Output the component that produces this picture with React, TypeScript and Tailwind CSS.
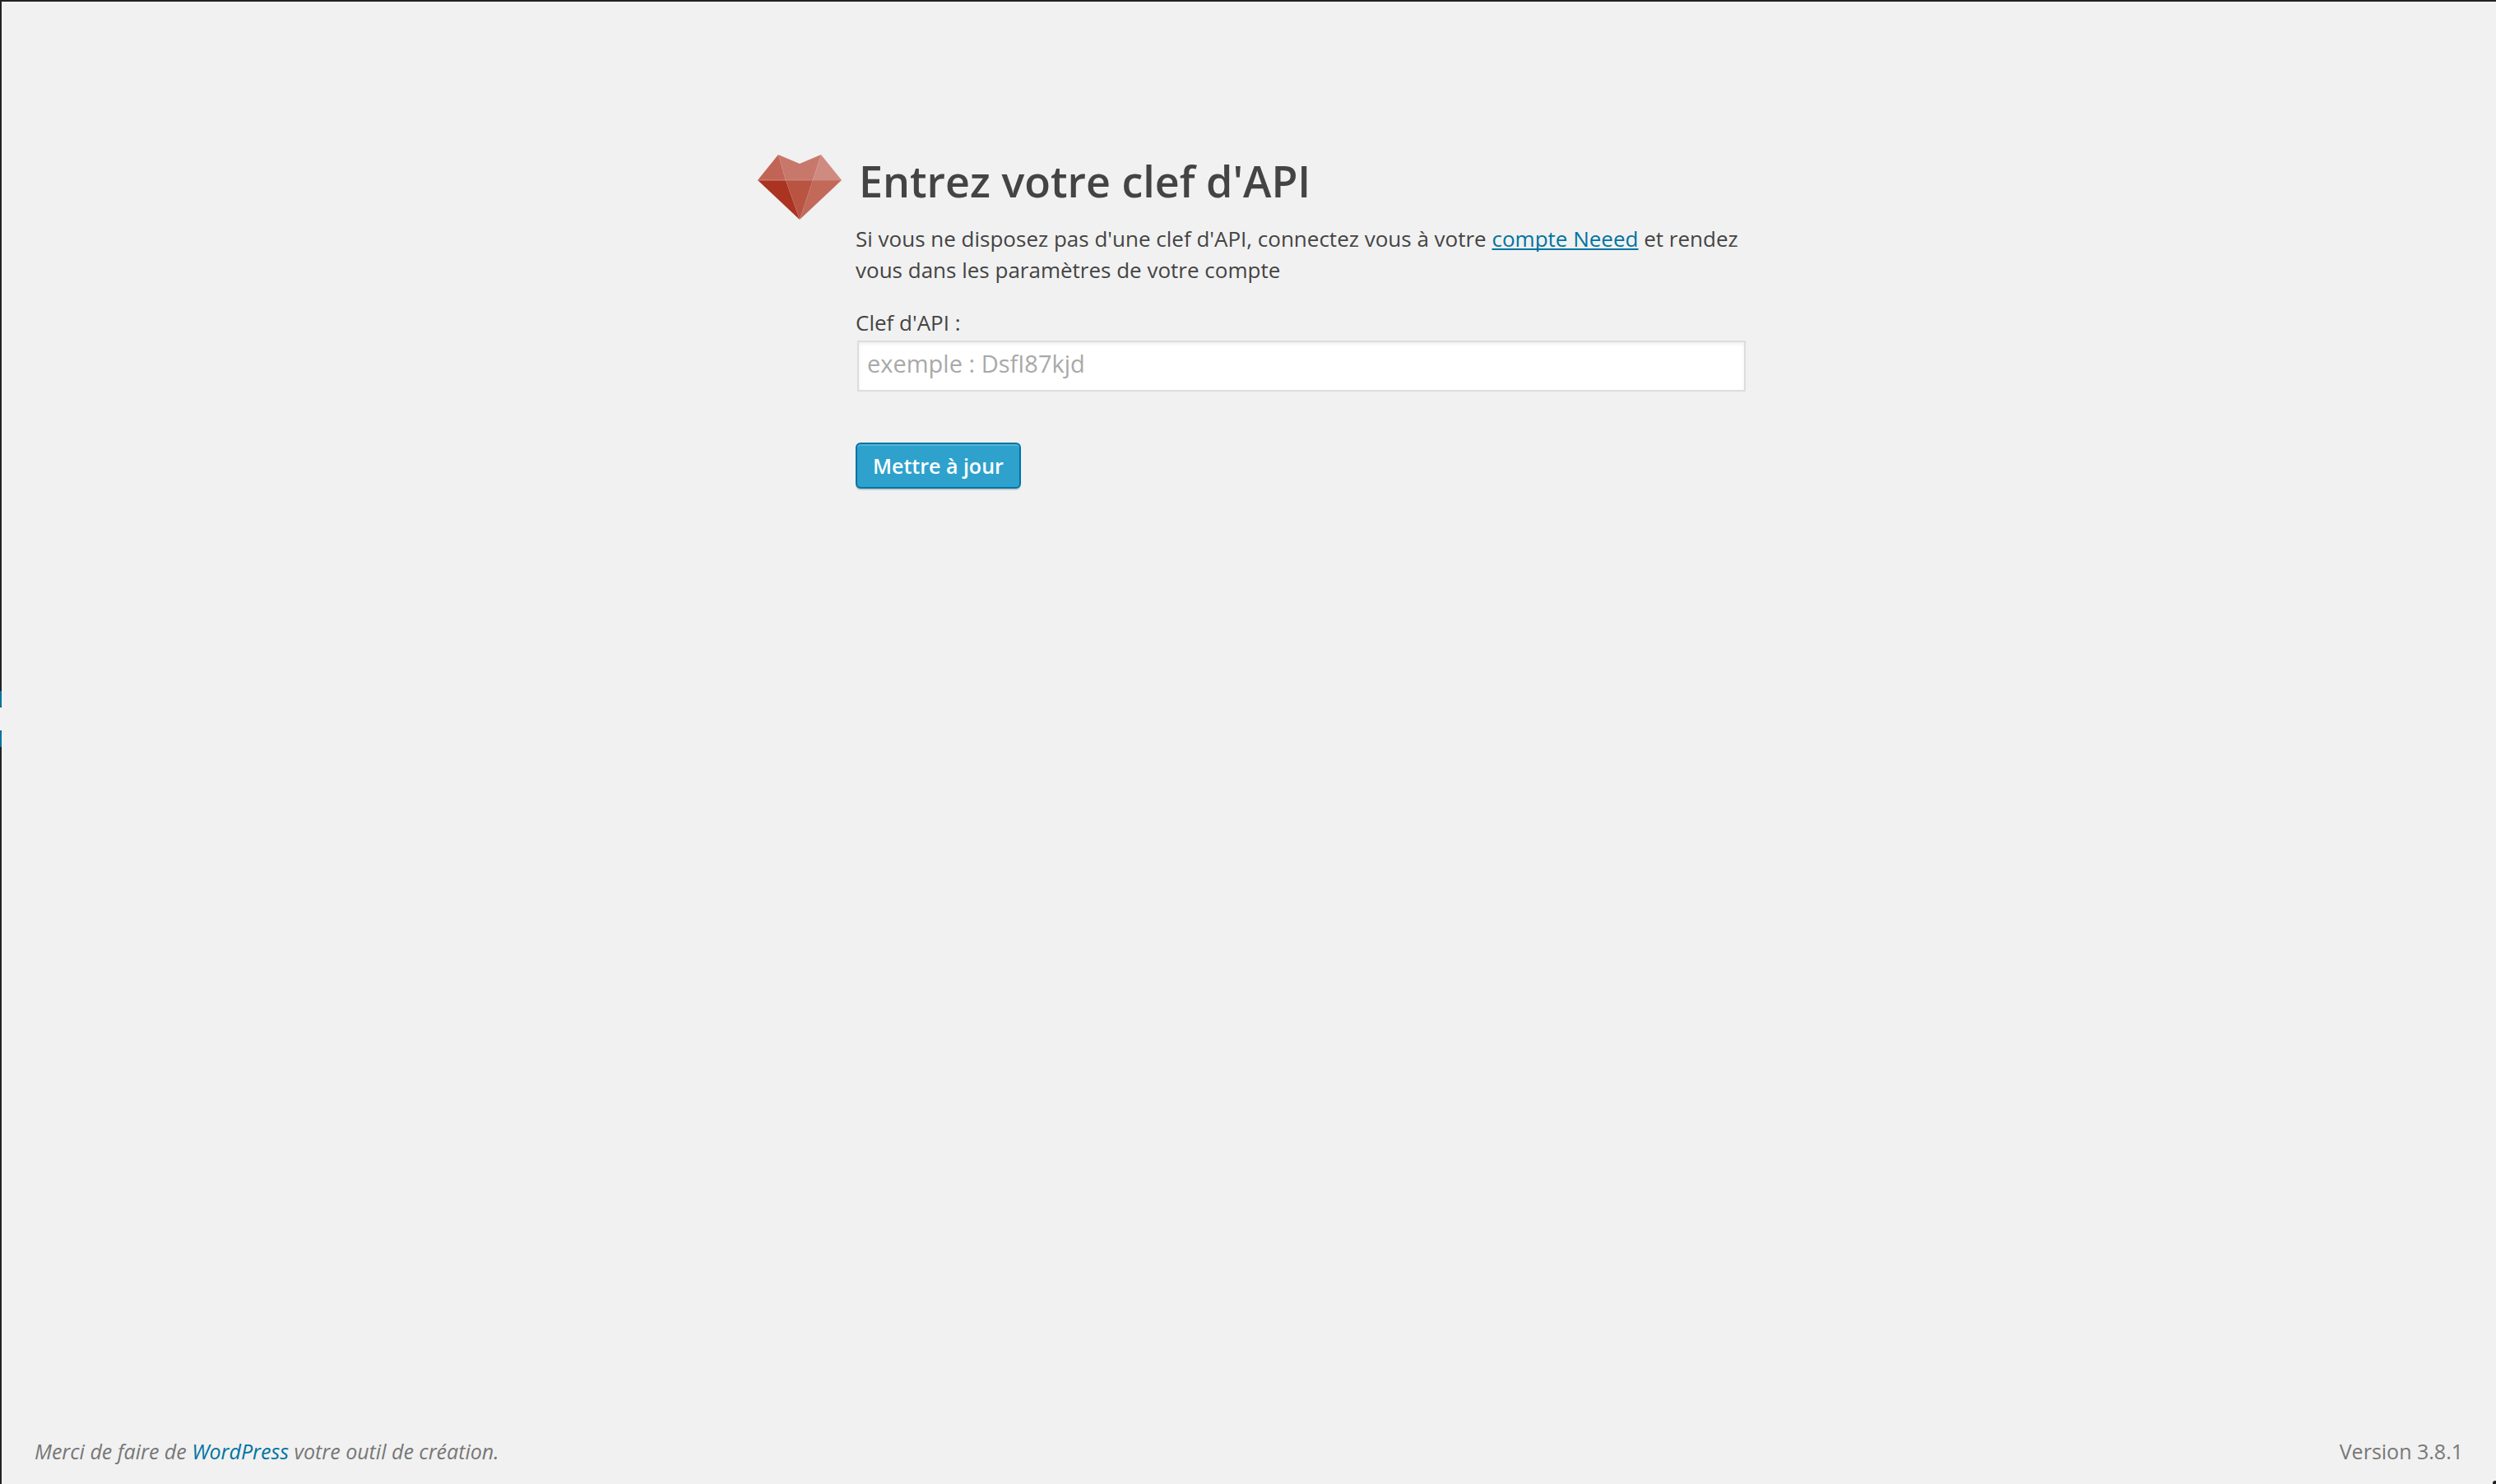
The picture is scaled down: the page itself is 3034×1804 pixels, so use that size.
function GemLogo() {
  return (
    <svg viewBox="0 0 102 79" className="mt-px block h-[79px] w-[102px] shrink-0" aria-hidden="true">
      <path d="M0 31 25 0 34 31Z" fill="#c26455" />
      <path d="M25 0 51 11 77 0 67 31H34Z" fill="#c8786b" />
      <path d="M77 0 102 31H67Z" fill="#cf8b80" />
      <path d="M0 31H34L51 79Z" fill="#ab3322" />
      <path d="M34 31H67L51 79Z" fill="#b95443" />
      <path d="M67 31H102L51 79Z" fill="#c2695a" />
      <path d="M1 31H101" stroke="#d08a7e" strokeWidth="1" />
    </svg>
  );
}

function SideRail() {
  return (
    <div className="flex w-[2px] shrink-0 flex-col bg-[#222]" aria-hidden="true">
      <div className="h-[838px]" />
      <div className="h-5 rounded-br-[2px] bg-[#0074a2]" />
      <div className="h-7 bg-[#f1f1f1]" />
      <div className="h-5 rounded-tr-[2px] bg-[#0074a2]" />
    </div>
  );
}

function ApiKeyForm() {
  return (
    <main className="mx-auto w-full max-w-[1208px] pt-[185px]">
      <form onSubmit={(e) => e.preventDefault()}>
        <div className="flex items-start pl-[7px]">
          <GemLogo />
          <h1 className="ml-[21px] text-[52px] leading-[66px] font-semibold">Entrez votre clef d'API</h1>
        </div>
        <div className="pt-1 pl-[126px]">
          <p>
            Si vous ne disposez pas d'une clef d'API, connectez vous à votre{" "}
            <a href="#compte" className="text-[#0074a2] underline decoration-2 underline-offset-[2px] [text-decoration-skip-ink:none]">
              compte Neeed
            </a>{" "}
            et rendez vous dans les paramètres de votre compte
          </p>
          <label htmlFor="api-key" className="mt-[26px] block">
            Clef d'API :
          </label>
          <div className="mt-[3px] pl-[2px]">
            <input
              id="api-key"
              type="text"
              placeholder="exemple : DsfI87kjd"
              className="block h-[62px] w-full border-2 border-[#ddd] bg-white px-[10px] pb-2 text-[29px] text-[#333] shadow-[inset_0_2px_4px_rgba(0,0,0,0.07)] outline-none placeholder:text-[#a9a9a9]"
            />
          </div>
          <button
            type="submit"
            className="mt-[62px] block h-14 rounded-[6px] border-2 border-[#0074a2] bg-[#2ea2cc] px-[19px] text-[25px] leading-[52px] font-semibold text-white shadow-[inset_0_2px_0_rgba(120,200,230,0.5),0_2px_0_rgba(0,0,0,0.15)]"
          >
            Mettre à jour
          </button>
        </div>
      </form>
    </main>
  );
}

function Footer() {
  return (
    <footer className="mt-auto flex justify-between px-10 pb-[21px] text-[25px] text-[#777]">
      <p className="italic">
        Merci de faire de{" "}
        <a href="#wordpress" className="text-[#0074a2]">
          WordPress
        </a>{" "}
        votre outil de création.
      </p>
      <p>Version 3.8.1</p>
    </footer>
  );
}

export default function App() {
  return (
    <div className="relative flex min-h-screen border-t-2 border-[#222] bg-[#f1f1f1] font-['Open_Sans',sans-serif] text-[26px] leading-[38px] text-[#444]">
      <SideRail />
      <div className="flex flex-1 flex-col">
        <ApiKeyForm />
        <Footer />
      </div>
      <div className="absolute right-0 bottom-0 size-1 rounded-tl-[3px] bg-[#222]" aria-hidden="true" />
    </div>
  );
}
